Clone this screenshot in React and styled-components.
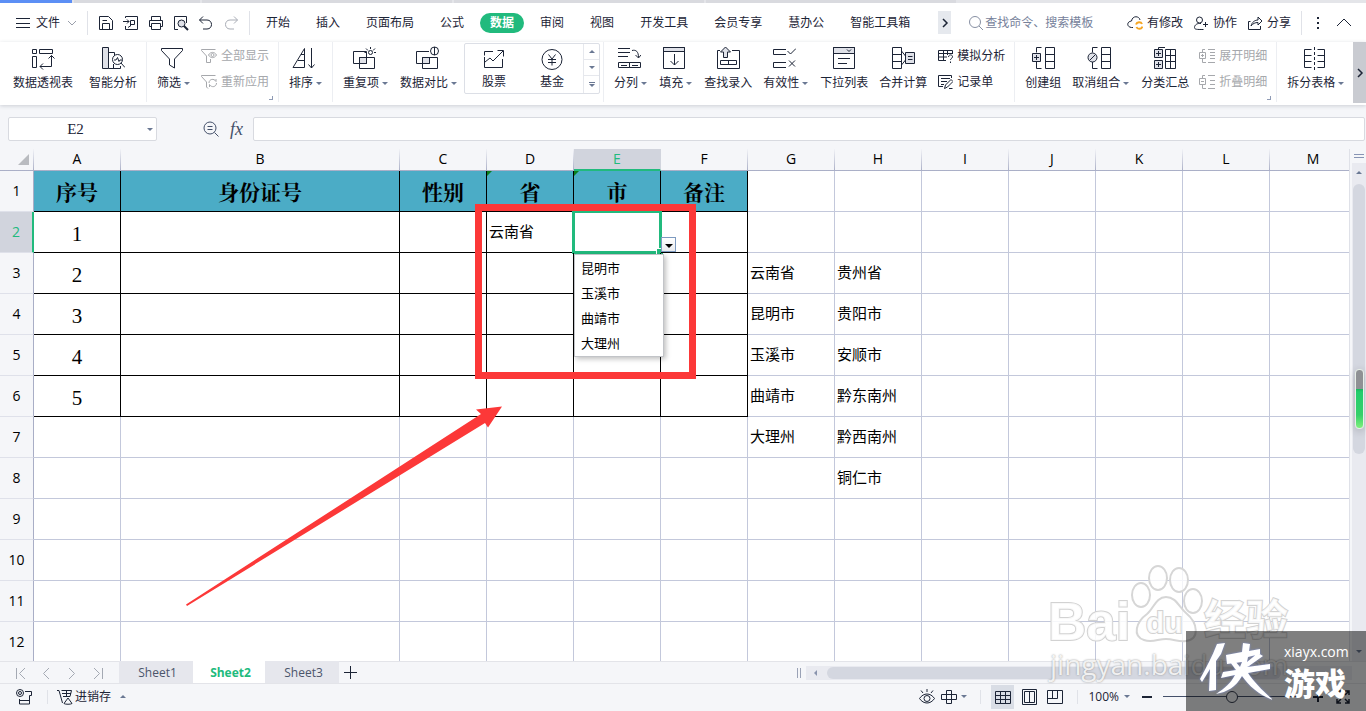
import styled, { createGlobalStyle, css } from 'styled-components';

const GlobalStyle = createGlobalStyle`
  * {
    box-sizing: border-box;
  }

  body {
    margin: 0;
    overflow: hidden;
    background: #f5f6f9;
    color: #1c2436;
    font: 12px/16px 'Open Sans', 'Noto Sans CJK SC', sans-serif;
  }

  button {
    padding: 0;
    border: 0;
    background: none;
    color: inherit;
    font: inherit;
    white-space: nowrap;
  }

  svg {
    display: block;
    flex: none;
  }
`;

const Page = styled.div`
  height: 100vh;
  display: flex;
  flex-direction: column;
  position: relative;
  overflow: hidden;
`;

/* ---------- icons ---------- */

const Svg = styled.svg`
  width: ${({ $size }) => $size}px;
  height: ${({ $size }) => $size}px;
  fill: none;
  stroke: currentColor;
  stroke-width: 1;

  .shade {
    fill: #dfe1e8;
  }
  .solid {
    fill: currentColor;
    stroke: none;
  }
  .orange {
    stroke: #f5a623;
    stroke-width: 2;
  }
`;

const Icon = ({ size = 16, children }) => (
  <Svg $size={size} viewBox={`0 0 ${size} ${size}`} aria-hidden="true">
    {children}
  </Svg>
);

const big = {
  pivot: (
    <>
      <path d="M1.5 3.5h4v4h-4zM8.5 3.5h13v4h-13zM1.5 10.5h4v11h-4z" />
      <path d="M20.5 9.500V20.500H9M17.500 12.500l3-3 3 3M12 17.500l-3 3 3 3" />
    </>
  ),
  analysis: (
    <>
      <path className="shade" d="M1.5 1.5h6v21h-6z" />
      <path d="M7.5 6.5h6v3M7.5 22.5h12M12.5 18v4.5M19.500 20v2.500" />
      <circle cx="16.5" cy="13.5" r="5" />
      <path d="M13 14h2l1.500-2.500 1.500 4 1-1.500h2M20 17l4 4.500" />
    </>
  ),
  filter: <path d="M1.5 2.5h21v2l-8 8.500v9l-5-3v-6l-8-8.500z" />,
  sort: (
    <path d="M1 21.5 12.5 2.5v19H1M9 8.5h3.500M6 14.5h6.500M19.5 2v20M16.5 18.5l3 3.500 3-3.500" />
  ),
  repeat: (
    <>
      <path className="shade" d="M7.5 11.5h7v6h-7z" />
      <path d="M1.5 5.5h13v12h-13zM7.5 11.5h15v11h-15z" />
      <circle cx="18.5" cy="6.5" r="2" />
      <path d="M18.5 1v2M14 2.5l2 2M23 2.5l-2 2M12.5 6.5H15M22 6.5h2" />
    </>
  ),
  compare: (
    <>
      <path className="shade" d="M7.5 11.5h7v6h-7z" />
      <path d="M14 5.5H1.5v12h13V11M7.5 11.5h15v11h-15z" />
      <circle cx="19.5" cy="5" r="4" />
      <path d="M19.5 1v8" />
    </>
  ),
  stock: <path d="M11 4.5H2.5v4M2.5 10v10.500h18V12M3 15l5-4 3 3 10-10M15.5 3.5h6v6" />,
  fund: (
    <>
      <circle cx="12" cy="12.5" r="10" />
      <path d="M8.5 7.5 12 12l3.500-4.500M8 12.5h8M8 15.5h8M12 12v6.500" />
    </>
  ),
  split: (
    <>
      <path d="M1 2.5h12M1 6.5h12M1 10.5h10M1.5 16.5h11v5h-11zM12.5 16.5h11v5h-11zM4 19.5h6M15 19.5h6" />
      <path d="M15 4.5c4-1 6.500 1 6.500 7M18.5 9l3 3 2.500-3" />
    </>
  ),
  fill: (
    <>
      <path className="shade" d="M1.5 1.5h21v4h-21z" />
      <path d="M1.5 1.5h21v21h-21zM12.5 8v11M8.5 15l4 4 4-4" />
    </>
  ),
  lookup: (
    <>
      <path d="M4 4.5H1.5v18h22v-18H16M4.5 14.5h16v4h-16zM12.5 14.5v4" />
      <path className="shade" d="M7.5 11.5V6h-3L9.500 1l5 5h-3v5.500z" />
    </>
  ),
  valid: <path d="M14 3.5H1.5v5H14M14 16.5H1.5v5H14M15.5 5l3 3L24 2.500M17 14.500l6 6M23 14.500l-6 6" />,
  list: (
    <>
      <path className="shade" d="M1.5 1.5h21v6h-21z" />
      <path d="M1.5 1.5h21v21h-21zM15 3.5l2 2 2-2M6 12.5h12M6 17.5h9" />
    </>
  ),
  consolidate: (
    <>
      <path d="M1.5 1.5h9v21h-9zM1.5 8.5h9M1.5 15.5h9M10.5 5l4 5M10.5 19l4-5" />
      <path className="shade" d="M14.5 6.5h9v11h-9z" />
      <path d="M17 10.5h4.500M17 13.5h4.500" />
    </>
  ),
  group: (
    <>
      <path d="M10.5 1.5h-5v5M5.5 15v7.500h5M14.5 1.5h9v21h-9zM14.5 8.5h9M14.5 15.5h9" />
      <path className="shade" d="M1.5 7.5h8v8h-8z" />
      <path d="M5.5 9v5M3 11.5h5" />
    </>
  ),
  ungroup: (
    <>
      <path d="M10.5 1.5h-5v5M5.5 16v6.500h5M14.5 1.5h9v21h-9zM14.5 8.5h9M14.5 15.5h9" />
      <circle className="shade" cx="5.5" cy="11.5" r="4.5" />
      <path d="M2.5 14.5l6-6" />
    </>
  ),
  subtotal: (
    <>
      <path d="M12 1.5H5.500v2M12.5 3.5h10v19h-10zM12.5 9.5h10M12.5 15.5h10M17.5 3.5v19" />
      <path className="shade" d="M1.5 3.5h8v8h-8zM1.5 14.5h8v8h-8z" />
      <path d="M5.5 5v5M3 7.5h5M5.5 16v5M3 18.5h5" />
    </>
  ),
  divide: (
    <>
      <path d="M9.5 3.5h-7v18h7M2.5 9.5h7M2.5 15.5h7M15.5 3.5h7v18h-7M15.5 9.5h7M15.5 15.5h7" />
      <path strokeDasharray="3 2" d="M12.5 1v23" />
    </>
  ),
};

const small = {
  save: <path d="M1.5 1.5h9l4 4v9h-13zM4.5 14V8.5h7V14M4.5 5.5H9" />,
  export: <path d="M2.5 3V1.5h12v13h-12V11M0 6.5h6M4 4.5l2 2-2 2M7.5 11V5.5h4v4h-4M5 12.5l3-2" />,
  print: <path d="M3.5 5V1.5h9V5M3.5 11.5h-2v-6h13v6h-2M3.500 8.5h9v6h-9z" />,
  preview: (
    <>
      <path d="M5 14.5H1.5v-13h12V8" />
      <circle className="shade" cx="8.5" cy="8.5" r="3.5" />
      <path strokeWidth="2" d="M11 11l4 4" />
    </>
  ),
  undo: <path d="M5 1.5 1.5 5 5 8.5M1.5 5H9c6 0 6 9 0 9H5" />,
  redo: <path d="M11 1.5 14.5 5 11 8.5M14.5 5H7c-6 0-6 9 0 9h4" />,
  showAll: (
    <>
      <path d="M9.500 11v3.500h-4V8L.5 2.5v-1h14" />
      <path d="M7.5 7c2-3.500 6-3.500 8 0-2 3.500-6 3.500-8 0z" />
      <circle cx="11.5" cy="7" r="1.5" />
    </>
  ),
  reapply: <path d="M7 14.5 5.5 13V8L.5 2.5v-1h14M8 9c0-4 5-5 7-1.500V5M15.500 9c0 4-5 5-7 1.500V13" />,
  whatIf: (
    <path d="M9 12.5H1.5v-10h14V6M1.5 5.5h14M1.5 9H10M6.5 2.5v10M10.5 2.5V7M11.5 9c0-3 4.500-2.500 4 0-.3 1.500-2 1.500-2 3M13.5 13.500V15" />
  ),
  record: (
    <path d="M14.5 4V1.5h-13v11H6M4 4.5h9M4 7.5h6M4 10.5h3M7.5 14.5l1-3.500L14 5.5l2 2L10.5 13zM12 14.5h3.500" />
  ),
  expand: (
    <path d="M6 1.5H3.5V4M3.5 10v4.500H7M.5 4.5h6v6h-6zM3.5 6v3M2 7.5h3M9 1.5h7M11 4.5h5M11 7.5h5M11 10.5h5M9 14.5h7" />
  ),
  collapse: (
    <path d="M6 1.5H3.5V4M3.5 10v4.500H7M.5 4.5h6v6h-6zM2 7.5h3M9 1.5h7M11 6.5h5M11 10.5h5M9 14.5h7" />
  ),
  search: (
    <>
      <circle cx="7" cy="7" r="5.5" />
      <path d="M11 11l4 4" />
    </>
  ),
  cloud: (
    <>
      <path d="M6 12.5H4.5c-5-.5-5-6 0-6.500 1-6 8-5 8.500-1" />
      <path className="orange" d="M9 9.5c1-3 5-3 6-.5M15.5 11.5c-1 3-5 3-6 .5" />
    </>
  ),
  people: (
    <>
      <circle cx="6.500" cy="5" r="3" />
      <path d="M8 8.500c-4-.5-6.500 1.500-6.500 4 0 2 2 2 9 2M10 9.5h5M12.500 7v5" />
    </>
  ),
  share: <path d="M3.500 6.5h-2v8h12V11M4 11c1-4 4-6 7-6V2l4 4-4 4V7.5C8 7.5 6 8.5 4 11z" />,
  zoomOut: (
    <>
      <circle cx="7" cy="7" r="6" />
      <path d="M11.5 11.5l4 4M4.5 5.5h5M4.5 8.5h5" />
    </>
  ),
  macro: (
    <>
      <circle cx="4" cy="4" r="3.5" />
      <circle cx="4" cy="4" r="1.5" />
      <path d="M9 2.500h6.500v4h-2v8M3.500 10v5h10v-3.500H3.500" />
    </>
  ),
  stockCart: (
    <path d="M0 1.5h2L5.500 14M4.500 1.5h10l-1.500 6H6M9.500 1.5v6M5 4.5h9M7 14.5l4-5.500 4 5.500c-1 1-7 1-8 0z" />
  ),
  eye: (
    <>
      <path d="M.5 9.5c4-6 11-6 15 0-4 6-11 6-15 0zM8 0v3M2 1.5 4 4M14 1.5 12 4" />
      <circle cx="8" cy="9.5" r="3" />
    </>
  ),
  cross: <path d="M5.5 1.5h5v13h-5zM.5 5.5h15v5H.5z" />,
  normal: <path d="M.5 2.5h15v12H.5zM.5 6.5h15M.5 10.5h15M5.5 2.5v12M10.5 2.5v12" />,
  pageView: <path d="M1.5 .5h14v15h-14zM3.5 2.5h10v11h-10zM8.5 2.5v11" />,
  breakView: <path d="M.5 1.5h15v13H.5zM5.5 1.5v8M.5 9.5h10v-8" />,
  fullscreen: (
    <path
      strokeWidth="1.500"
      d="M10 2h4v4M14 2l-4 4M6 2H2v4M2 2l4 4M10 14h4v-4M14 14l-4-4M6 14H2v-4M2 14l4-4"
    />
  ),
};

const Caret = styled.i`
  display: block;
  width: 0;
  height: 0;
  flex: none;
  border: solid transparent;
  ${({ $up }) =>
    $up
      ? css`
          border-width: 0 3px 3px;
          border-bottom-color: #6a7893;
        `
      : css`
          border-width: 3px 3px 0;
          border-top-color: #6a7893;
        `}
`;

/* ---------- title strip and menu ---------- */

const DocStrip = styled.div`
  height: 3px;
  display: flex;
  gap: 2px;
  background: #e4e5e9;

  span {
    width: 250px;
    background: #d9dadf;
  }
  .active {
    width: 72px;
    background: #5c8ff5;
  }
  .first {
    width: 126px;
  }
`;

const MenuBar = styled.header`
  height: 39px;
  display: flex;
  align-items: center;
  background: #fff;
  white-space: nowrap;
`;

const FileButton = styled.button`
  display: flex;
  align-items: center;
  gap: 5px;
  padding: 0 8px 0 15px;
`;

const Divider = styled.i`
  width: 1px;
  height: 24px;
  flex: none;
  background: #e0e2e8;
`;

const QuickTools = styled.div`
  display: flex;
  gap: 9px;
  padding: 0 10px;

  button:last-child {
    color: #a9adb6;
  }
`;

const Tabs = styled.nav`
  display: flex;
  padding-left: 3px;
`;

const MenuTab = styled.button`
  height: 20px;
  margin: 0 3px;
  padding: 0 10px;
  border-radius: 10px;
  ${({ $active }) =>
    $active &&
    css`
      background: #21ba7d;
      color: #fff;
      font-weight: 700;
    `}
`;

const MoreButton = styled.button`
  width: 13px;
  height: 23px;
  margin-left: 15px;
  display: grid;
  place-items: center;
  background: #e6e9ee;
`;

const SearchBox = styled.label`
  display: flex;
  align-items: center;
  gap: 1px;
  flex: 1;
  padding-left: 17px;
  color: #8790a3;

  input {
    width: 120px;
    padding: 0;
    border: 0;
    outline: 0;
    background: none;
    font: inherit;
    &::placeholder {
      color: #76819a;
      opacity: 1;
    }
  }
`;

const AccountTools = styled.div`
  display: flex;
  align-items: center;
  gap: 10px;
  padding-right: 14px;

  button {
    display: flex;
    align-items: center;
    gap: 4px;
  }
`;

/* ---------- ribbon ---------- */

const RibbonBar = styled.div`
  height: 63px;
  display: flex;
  background: #fff;
  box-shadow: 0 1px 4px rgba(40, 50, 70, 0.2);
  position: relative;
`;

const Group = styled.div`
  height: 60px;
  display: flex;
  flex: none;
  padding: 0 3px 0 5px;
  border-right: 1px solid #eceef2;
  position: relative;
  &:first-child {
    padding-left: 8px;
    gap: 5px;
  }
`;

const Corner = styled.i`
  position: absolute;
  right: 5px;
  bottom: 2px;
  width: 4px;
  height: 4px;
  border: solid #8f9bb5;
  border-width: 0 1px 1px 0;
`;

const BigButton = styled.button`
  display: flex;
  flex-direction: column;
  align-items: center;
  padding: 4px 6px 0 5px;

  > svg {
    margin-right: ${({ $menu }) => ($menu ? 4 : 0)}px;
  }
  span {
    display: flex;
    align-items: center;
    margin-top: 5px;
  }
  ${Caret} {
    margin: 0 1px 0 3px;
  }
`;

const Stack = styled.div`
  display: flex;
  flex-direction: column;
  padding-top: 1px;
`;

const SmallButton = styled.button`
  height: 26px;
  display: flex;
  align-items: center;
  gap: 4px;
  padding: 0 6px 0 4px;
  color: ${({ disabled }) => (disabled ? '#a6a8ac' : 'inherit')};
`;

const Gallery = styled.div`
  width: 136px;
  height: 51px;
  display: flex;
  margin-top: 1px;
  border: 1px solid #dcdfe6;
  border-radius: 2px;

  > button {
    width: 58px;
    display: flex;
    flex-direction: column;
    align-items: center;
    gap: 3px;
    padding-top: 3px;
  }
`;

const GallerySteps = styled.div`
  flex: 1;
  display: grid;
  margin-left: 2px;
  border-left: 1px solid #e6e8ed;

  button {
    display: grid;
    place-content: center;
    gap: 1px;
    & + button {
      border-top: 1px solid #e6e8ed;
    }
  }
  hr {
    width: 6px;
    height: 1px;
    margin: 0;
    border: 0;
    background: #6a7893;
  }
`;

const ScrollRight = styled.button`
  width: 13px;
  height: 61px;
  display: grid;
  place-items: center;
  background: #c9cbd1;
  position: absolute;
  right: 0;
`;

/* ---------- formula bar ---------- */

const FormulaBar = styled.div`
  height: 44px;
  display: flex;
  align-items: center;
  padding: 4px 1px 0 8px;

  input {
    height: 24px;
    border: 1px solid #d8dae0;
    border-radius: 2px;
    outline: 0;
    background: #fff;
  }
`;

const NameBox = styled.div`
  width: 149px;
  display: flex;
  align-items: center;

  input {
    width: 149px;
    padding: 0 14px 0 0;
    color: #1c2436;
    font: 15px 'Liberation Serif', serif;
    text-align: center;
  }
  button {
    width: 14px;
    margin-left: -14px;
    padding: 8px 5px 8px 4px;
  }
`;

const FormulaTools = styled.div`
  display: flex;
  align-items: center;
  gap: 11px;
  margin: 0 10px 0 46px;
  color: #44506a;

  em {
    font: italic 18px/20px 'Liberation Serif', serif;
  }
`;

const FormulaInput = styled.input`
  flex: 1;
`;

/* ---------- sheet ---------- */

const SheetArea = styled.main`
  flex: 1;
  min-height: 0;
  display: flex;
`;

const GridPane = styled.div`
  flex: 1;
  min-width: 0;
  overflow: hidden;
  position: relative;
  background: #fff;
`;

const Grid = styled.table`
  width: 1357px;
  table-layout: fixed;
  border-collapse: separate;
  border-spacing: 0;
  color: #000;
  font: 15px/20px 'Noto Sans CJK SC', sans-serif;
`;

const headActive = css`
  background: #d1d4dd;
  color: #21ba7d;
`;

const ColHead = styled.th`
  height: 22px;
  padding: 0 0 1px;
  background: #f5f6f9;
  border-right: 1px solid;
  border-bottom: 1px solid;
  border-image: linear-gradient(#f5f6f9, #a9aec6) 1;
  font: 14px/20px 'Open Sans', sans-serif;
  ${({ $active }) =>
    $active &&
    css`
      ${headActive}
      padding: 0;
      border-image: none;
      border-right-color: #d1d4dd;
      border-bottom: 2px solid #21ba7d;
    `}

  svg {
    margin: 2px 0 0 18px;
    color: #b9bbc0;
  }
`;

const RowHead = styled.th`
  height: 41px;
  padding: 0;
  background: #f5f6f9;
  border-right: 1px solid #a9aec6;
  border-bottom: 1px solid #dfe1ea;
  font: 14px/20px 'Open Sans', sans-serif;
  ${({ $active }) =>
    $active &&
    css`
      ${headActive}
      border-right: 2px solid #21ba7d;
    `}
`;

const Cell = styled.td`
  padding: 0 2px 2px;
  border: solid ${({ $inked }) => ($inked ? '#000' : '#c3c8db')};
  border-width: 0 1px 1px 0;
  white-space: nowrap;
  position: relative;

  ${({ $kind }) =>
    $kind === 'title' &&
    css`
      padding: 0;
      background: #4bacc6;
      font: 700 21px/30px 'Noto Serif CJK SC', 'Noto Sans CJK SC', serif;
      text-align: center;
    `}
  ${({ $kind }) =>
    $kind === 'index' &&
    css`
      padding: 3px 0 0;
      font: 21px/24px 'Liberation Serif', serif;
      text-align: center;
    `}
`;

const CellMark = styled.i`
  position: absolute;
  top: 0;
  left: 0;
  border: solid transparent;
  border-width: 5px 5px 0 0;
  border-top-color: #0a7f1d;
`;

const Selection = styled.div`
  position: absolute;
  inset: -1px -2px -2px -2px;
  border: 3px solid #21ba7d;
  border-top-width: 2px;

  &::after {
    content: '';
    position: absolute;
    right: -4px;
    bottom: -4px;
    width: 6px;
    height: 6px;
    border: solid #fff;
    border-width: 1px 0 0 1px;
    background: #21ba7d;
  }
`;

const PickButton = styled.button`
  position: absolute;
  left: 87px;
  top: 25px;
  z-index: 2;
  width: 15px;
  height: 15px;
  display: grid;
  place-items: center;
  padding-top: 2px;
  background: linear-gradient(#fff, #e9ebef);
  border: 1px solid #7d9ac0;
  ${Caret} {
    border-width: 4px 4px 0;
    border-top-color: #000;
  }
`;

const Options = styled.ul`
  position: absolute;
  left: 0;
  top: 42px;
  z-index: 2;
  width: 90px;
  margin: 0;
  padding: 0 0 1px;
  list-style: none;
  background: #fff;
  border: 1px solid #c2c4c8;
  box-shadow: 2px 2px 5px rgba(0, 0, 0, 0.25);

  li {
    padding-left: 6px;
    font-size: 13px;
    line-height: 25px;
  }
`;

const RedBox = styled.div`
  position: absolute;
  left: 475px;
  top: 55px;
  z-index: 3;
  width: 221px;
  height: 175px;
  border: 7px solid #fc3838;
`;

const RedArrow = styled.svg`
  position: absolute;
  left: 180px;
  top: 251px;
  z-index: 3;
  fill: #fc3838;
`;

const VScroll = styled.aside`
  width: 17px;
  display: flex;
  flex-direction: column;
  align-items: center;
  padding-left: 2px;
  border-left: 1px solid #dfe1e8;
  background: #f5f6f9;
`;

const SplitHandle = styled.i`
  width: 10px;
  height: 4px;
  margin: 5px 0;
  border: solid #8794b4;
  border-width: 1px 0;
`;

const VTrack = styled.div`
  flex: 1;
  width: 14px;
  display: flex;
  flex-direction: column;
  align-items: center;
  padding: 8px 0;
  background: #e9eaf0;

  ${Caret}:last-child {
    margin-top: auto;
  }
`;

const VThumb = styled.div`
  width: 12px;
  height: 270px;
  margin-top: 10px;
  padding: 185px 2px 0;
  border-radius: 6px;
  background: #d4d7e0;

  i {
    display: block;
    width: 9px;
    height: 60px;
    border: 1px solid #e8efe8;
    border-radius: 4px;
    background: linear-gradient(#8f9194 19px, #17b75c 19px, #22cd6c 22px, #35d06a 45px, #7ef07c);
    box-shadow: 0 2px 8px rgba(0, 0, 0, 0.2);
  }
`;

/* ---------- bottom bars ---------- */

const SheetBar = styled.footer`
  height: 23px;
  display: flex;
  align-items: center;
  border-top: 1px solid #e3e4e9;
  border-bottom: 1px solid #e3e4e9;
`;

const SheetNav = styled.div`
  width: 119px;
  display: flex;
  gap: 10px;
  padding-left: 12px;
  color: #a4a9b3;
`;

const SheetTab = styled.button`
  height: 22px;
  width: ${({ $active }) => ($active ? 72 : 74)}px;
  margin-top: -1px;
  padding: 2px 0 0 3px;
  background: ${({ $active }) => ($active ? '#fff' : '#e6e7ed')};
  color: ${({ $active }) => ($active ? '#21ba7d' : '#4b556b')};
  font-weight: ${({ $active }) => ($active ? 700 : 400)};
`;

const AddSheet = styled.button`
  margin: 0 auto 0 4px;
`;

const HSplit = styled.i`
  width: 4px;
  height: 10px;
  margin-right: 5px;
  border: solid #9aa2b6;
  border-width: 0 1px;
`;

const HTrack = styled.div`
  width: 40%;
  height: 14px;
  display: flex;
  align-items: center;
  justify-content: space-between;
  margin-right: 14px;
  padding: 0 7px 0 6px;
  background: #e9eaf0;
  color: #8a94ad;

  i {
    flex: 1;
    height: 12px;
    margin: 0 56px 0 7px;
    border-radius: 6px;
    background: #d4d7e0;
  }
`;

const StatusBar = styled.footer`
  height: 27px;
  display: flex;
  align-items: center;
  padding: 0 15px 2px 16px;
`;

const StatusButton = styled.button`
  height: 24px;
  min-width: 23px;
  display: flex;
  align-items: center;
  justify-content: center;
  gap: ${({ $gap = 2 }) => $gap}px;
  background: ${({ $active }) => ($active ? '#d9dde5' : 'none')};
`;

const ViewTools = styled.div`
  display: flex;
  align-items: center;
  gap: 3px;
  margin: 0 11px 0 auto;
`;

const Spacer = styled(Divider)`
  height: 14px;
  margin: 0 ${({ $right }) => $right}px 0 ${({ $left }) => $left}px;
`;

const ZoomRange = styled.input`
  width: 138px;
  height: 14px;
  margin: 0 11px 0 10px;
  appearance: none;
  background: linear-gradient(#44506a, #44506a) center / 100% 1px no-repeat;

  &::-webkit-slider-thumb {
    appearance: none;
    width: 12px;
    height: 12px;
    border: 1px solid #333b4d;
    border-radius: 50%;
    background: #f5f6f9;
  }
`;

const FullScreen = styled.button`
  margin-left: 11px;
`;

/* ---------- watermarks ---------- */

const Watermark = styled.div`
  position: absolute;
  right: 76px;
  bottom: 26px;
  width: 242px;
  height: 120px;
  color: rgba(255, 255, 255, 0.85);
  font-family: 'Liberation Sans', 'Noto Sans CJK SC', sans-serif;
  font-weight: 700;
  white-space: nowrap;
  pointer-events: none;

  svg {
    position: absolute;
    left: 80px;
    top: 0;
    fill: rgba(255, 255, 255, 0.8);
    stroke: #d6d6d6;
  }
`;

const Mark = styled.span`
  position: absolute;
  left: ${({ $left }) => $left}px;
  top: ${({ $top }) => $top}px;
  font-size: ${({ $size }) => $size}px;
  line-height: 1;
  -webkit-text-stroke: 2px #d2d2d2;
  paint-order: stroke fill;
`;

const MarkUrl = styled.span`
  position: absolute;
  left: 2px;
  top: 83px;
  font: 28px/32px 'Open Sans', sans-serif;
  text-shadow: 0 0 2px #8c8c8c;
`;

const SiteBadge = styled.div`
  position: absolute;
  right: 0;
  bottom: 0;
  width: 180px;
  height: 80px;
  display: flex;
  align-items: center;
  gap: 12px;
  padding-left: 14px;
  background: rgba(0, 0, 0, 0.5);
  color: #fff;
  white-space: nowrap;
  pointer-events: none;

  svg {
    fill: #fff;
    filter: drop-shadow(0 0 1px #7f8fd0);
  }
  div {
    display: flex;
    flex-direction: column;
    gap: 5px;
    font-size: 14px;
  }
  b {
    font: 900 31px/34px 'Noto Sans CJK SC', sans-serif;
  }
`;

/* ---------- data ---------- */

const menuTabs = ['开始', '插入', '页面布局', '公式', '数据', '审阅', '视图', '开发工具', '会员专享', '慧办公', '智能工具箱'];

const quickTools = [
  ['save', '保存'],
  ['export', '输出为PDF'],
  ['print', '打印'],
  ['preview', '打印预览'],
  ['undo', '撤销'],
  ['redo', '恢复'],
];

const accountTools = [
  ['cloud', '有修改'],
  ['people', '协作'],
  ['share', '分享'],
];

const navIcons = [
  ['第一张', 'M4.500 3v11M13 3 7.500 8.500 13 14'],
  ['上一张', 'M11 3 5.500 8.500 11 14'],
  ['下一张', 'M5 3l5.500 5.500L5 14'],
  ['最后一张', 'M12.500 3v11M4 3l5.500 5.500L4 14'],
];

const columns = 'ABCDEFGHIJKLM'.split('');
const rows = Array.from({ length: 12 }, (_, i) => i + 1);
const titles = ['序号', '身份证号', '性别', '省', '市', '备注'];
const cities = ['昆明市', '玉溪市', '曲靖市', '大理州'];

const cellText = {
  D2: '云南省',
  G3: '云南省',
  G4: '昆明市',
  G5: '玉溪市',
  G6: '曲靖市',
  G7: '大理州',
  H3: '贵州省',
  H4: '贵阳市',
  H5: '安顺市',
  H6: '黔东南州',
  H7: '黔西南州',
  H8: '铜仁市',
};

const Tool = ({ icon, label, menu }) => (
  <BigButton type="button" $menu={menu}>
    <Icon size={24}>{big[icon]}</Icon>
    <span>
      {label}
      {menu && <Caret />}
    </span>
  </BigButton>
);

const SmallTool = ({ icon, label, disabled }) => (
  <SmallButton type="button" disabled={disabled}>
    <Icon>{small[icon]}</Icon>
    {label}
  </SmallButton>
);

const Chevron = () => (
  <Icon size={12}>
    <path strokeWidth="1.500" d="M4 2l4 4-4 4" />
  </Icon>
);

const Menu = () => (
  <MenuBar>
    <FileButton type="button">
      <Icon>
        <path d="M1 3.5h14M1 8.5h14M1 12.5h14" />
      </Icon>
      文件
      <Icon size={14}>
        <path stroke="#9a9fab" d="M3 5l4 4 4-4" />
      </Icon>
    </FileButton>
    <Divider />
    <QuickTools>
      {quickTools.map(([icon, label]) => (
        <button key={icon} type="button" aria-label={label}>
          <Icon>{small[icon]}</Icon>
        </button>
      ))}
    </QuickTools>
    <Divider />
    <Tabs>
      {menuTabs.map((tab) => (
        <MenuTab key={tab} type="button" $active={tab === '数据'}>
          {tab}
        </MenuTab>
      ))}
    </Tabs>
    <MoreButton type="button" aria-label="更多">
      <Chevron />
    </MoreButton>
    <SearchBox>
      <Icon>{small.search}</Icon>
      <input placeholder="查找命令、搜索模板" aria-label="查找命令、搜索模板" />
    </SearchBox>
    <AccountTools>
      {accountTools.map(([icon, label]) => (
        <button key={icon} type="button">
          <Icon>{small[icon]}</Icon>
          {label}
        </button>
      ))}
      <Divider />
      <button type="button" aria-label="选项">
        <Icon size={14}>
          <path className="solid" d="M5 1h2v2H5zM5 6h2v2H5zM5 11h2v2H5z" />
        </Icon>
      </button>
      <button type="button" aria-label="收起功能区">
        <Icon>
          <path d="M1 11l7-7 7 7" />
        </Icon>
      </button>
    </AccountTools>
  </MenuBar>
);

const Ribbon = () => (
  <RibbonBar>
    <Group>
      <Tool icon="pivot" label="数据透视表" />
      <Tool icon="analysis" label="智能分析" />
    </Group>
    <Group>
      <Tool icon="filter" label="筛选" menu />
      <Stack>
        <SmallTool icon="showAll" label="全部显示" disabled />
        <SmallTool icon="reapply" label="重新应用" disabled />
      </Stack>
      <Corner />
    </Group>
    <Group>
      <Tool icon="sort" label="排序" menu />
    </Group>
    <Group>
      <Tool icon="repeat" label="重复项" menu />
      <Tool icon="compare" label="数据对比" menu />
      <Gallery>
        <button type="button">
          <Icon size={24}>{big.stock}</Icon>
          股票
        </button>
        <button type="button">
          <Icon size={24}>{big.fund}</Icon>
          基金
        </button>
        <GallerySteps>
          <button type="button" aria-label="上一行">
            <Caret $up />
          </button>
          <button type="button" aria-label="下一行">
            <Caret />
          </button>
          <button type="button" aria-label="全部">
            <hr />
            <Caret />
          </button>
        </GallerySteps>
      </Gallery>
    </Group>
    <Group>
      <Tool icon="split" label="分列" menu />
      <Tool icon="fill" label="填充" menu />
      <Tool icon="lookup" label="查找录入" />
      <Tool icon="valid" label="有效性" menu />
      <Tool icon="list" label="下拉列表" />
      <Tool icon="consolidate" label="合并计算" />
      <Stack>
        <SmallTool icon="whatIf" label="模拟分析" />
        <SmallTool icon="record" label="记录单" />
      </Stack>
    </Group>
    <Group>
      <Tool icon="group" label="创建组" />
      <Tool icon="ungroup" label="取消组合" menu />
      <Tool icon="subtotal" label="分类汇总" />
      <Stack>
        <SmallTool icon="expand" label="展开明细" disabled />
        <SmallTool icon="collapse" label="折叠明细" disabled />
      </Stack>
      <Corner />
    </Group>
    <Group>
      <Tool icon="divide" label="拆分表格" menu />
    </Group>
    <ScrollRight type="button" aria-label="向右滚动">
      <Chevron />
    </ScrollRight>
  </RibbonBar>
);

const SheetCell = ({ col, row }) => {
  const index = columns.indexOf(col);
  const inked = index < 6 && row < 7;
  if (row === 1 && inked) {
    return (
      <Cell $inked $kind="title">
        {titles[index]}
        {(col === 'D' || col === 'E') && <CellMark />}
      </Cell>
    );
  }
  if (col === 'A' && inked) {
    return (
      <Cell $inked $kind="index">
        {row - 1}
      </Cell>
    );
  }
  return (
    <Cell $inked={inked}>
      {cellText[col + row]}
      {col + row === 'E2' && (
        <>
          <Selection />
          <PickButton type="button" aria-label="选择市">
            <Caret />
          </PickButton>
          <Options role="listbox" aria-label="市">
            {cities.map((city) => (
              <li key={city} role="option" aria-selected="false">
                {city}
              </li>
            ))}
          </Options>
        </>
      )}
    </Cell>
  );
};

const Sheet = () => (
  <GridPane>
    <Grid>
      <colgroup>
        <col width="34" />
        {columns.map((col) => (
          <col key={col} width={col === 'B' ? 279 : 87} />
        ))}
      </colgroup>
      <thead>
        <tr>
          <ColHead aria-label="全选">
            <Icon size={12}>
              <path className="solid" d="M11 0v11H0z" />
            </Icon>
          </ColHead>
          {columns.map((col) => (
            <ColHead key={col} $active={col === 'E'}>
              {col}
            </ColHead>
          ))}
        </tr>
      </thead>
      <tbody>
        {rows.map((row) => (
          <tr key={row}>
            <RowHead $active={row === 2}>{row}</RowHead>
            {columns.map((col) => (
              <SheetCell key={col} col={col} row={row} />
            ))}
          </tr>
        ))}
      </tbody>
    </Grid>
    <RedBox />
    <RedArrow width="330" height="210" viewBox="0 0 330 210">
      <path d="M6 204.5 301 14l-5-4.500 26-3-14 21-3-4.500L7 206z" />
    </RedArrow>
  </GridPane>
);

const SheetTabs = () => (
  <SheetBar>
    <SheetNav>
      {navIcons.map(([label, d]) => (
        <button key={label} type="button" aria-label={label}>
          <Icon>
            <path d={d} />
          </Icon>
        </button>
      ))}
    </SheetNav>
    {['Sheet1', 'Sheet2', 'Sheet3'].map((name) => (
      <SheetTab key={name} type="button" $active={name === 'Sheet2'}>
        {name}
      </SheetTab>
    ))}
    <AddSheet type="button" aria-label="新建工作表">
      <Icon>
        <path d="M7.5 1v13M1 7.5h13" />
      </Icon>
    </AddSheet>
    <HSplit />
    <HTrack>
      <Icon size={8}>
        <path className="solid" d="M5 1v6L2 4z" />
      </Icon>
      <i />
      <Icon size={8}>
        <path className="solid" d="M2 1v6l3-3z" />
      </Icon>
    </HTrack>
  </SheetBar>
);

const Status = () => (
  <StatusBar>
    <Icon>{small.macro}</Icon>
    <Spacer $left={15} $right={9} />
    <StatusButton type="button">
      <Icon>{small.stockCart}</Icon>
      进销存
    </StatusButton>
    <StatusButton type="button" aria-label="展开">
      <Caret $up />
    </StatusButton>
    <ViewTools>
      <StatusButton type="button" aria-label="护眼模式">
        <Icon>{small.eye}</Icon>
      </StatusButton>
      <StatusButton type="button" aria-label="阅读模式" $gap={4}>
        <Icon>{small.cross}</Icon>
        <Caret />
      </StatusButton>
      <Spacer $left={10} $right={7} />
      <StatusButton type="button" aria-label="普通视图" $active>
        <Icon>{small.normal}</Icon>
      </StatusButton>
      <StatusButton type="button" aria-label="分页预览">
        <Icon>{small.pageView}</Icon>
      </StatusButton>
      <StatusButton type="button" aria-label="页面布局">
        <Icon>{small.breakView}</Icon>
      </StatusButton>
      <Spacer $left={8} $right={7} />
      <StatusButton type="button" $gap={5}>
        100%
        <Caret />
      </StatusButton>
    </ViewTools>
    <button type="button" aria-label="缩小">
      <Icon size={12}>
        <path strokeWidth="2" d="M1 6h10" />
      </Icon>
    </button>
    <ZoomRange type="range" defaultValue="50" aria-label="显示比例" />
    <button type="button" aria-label="放大">
      <Icon size={12}>
        <path strokeWidth="2" d="M1 6h10M6 1v10" />
      </Icon>
    </button>
    <FullScreen type="button" aria-label="全屏">
      <Icon>{small.fullscreen}</Icon>
    </FullScreen>
  </StatusBar>
);

const Baidu = () => (
  <Watermark>
    <Mark $left={0} $top={30} $size={53}>Bai</Mark>
    <svg width="80" height="80" viewBox="0 0 80 80" strokeWidth="2">
      <ellipse cx="13" cy="30" rx="9" ry="12" />
      <ellipse cx="30" cy="13" rx="9" ry="12" />
      <ellipse cx="51" cy="15" rx="9" ry="12" />
      <ellipse cx="65" cy="36" rx="9" ry="12" />
      <path d="M38 32c10 0 13 10 20 16 12 10 14 26 0 28-8 1-12-2-20-2s-14 4-22 1C4 71 8 57 19 49c7-6 9-17 19-17z" />
    </svg>
    <Mark $left={98} $top={43} $size={30}>du</Mark>
    <Mark $left={156} $top={35} $size={42}>经验</Mark>
    <MarkUrl>jingyan.baidu.com</MarkUrl>
  </Watermark>
);

const Badge = () => (
  <SiteBadge>
    <svg width="72" height="58" viewBox="0 0 72 58">
      <path d="M17 2l8-1-4 11-5 7v29l-7 1 1-22-8 13-2-3C6 26 12 15 17 2z" />
      <path d="M26 13l16-3 1-9 7 1-1 7 11-2v5l-12 3-1 5 11-9 5 3-14 10-2 1 23-3v5l-22 4c5 8 14 17 25 27-14-5-24-14-31-24-6 11-15 16-26 18 9-6 15-11 19-19l-14 3 2-6 13-2-6-8 5-1 5 6 2-5-15 2z" />
    </svg>
    <div>
      xiayx.com
      <b>游戏</b>
    </div>
  </SiteBadge>
);

const App = () => (
  <Page>
    <GlobalStyle />
    <DocStrip>
      <span className="active" />
      <span className="first" />
      <span />
      <span />
      <span />
    </DocStrip>
    <Menu />
    <Ribbon />
    <FormulaBar>
      <NameBox>
        <input defaultValue="E2" aria-label="名称框" />
        <button type="button" aria-label="名称列表">
          <Caret />
        </button>
      </NameBox>
      <FormulaTools>
        <Icon>{small.zoomOut}</Icon>
        <em>fx</em>
      </FormulaTools>
      <FormulaInput aria-label="编辑栏" />
    </FormulaBar>
    <SheetArea>
      <Sheet />
      <VScroll>
        <SplitHandle />
        <VTrack>
          <Caret $up />
          <VThumb>
            <i />
          </VThumb>
          <Caret />
        </VTrack>
      </VScroll>
    </SheetArea>
    <SheetTabs />
    <Status />
    <Baidu />
    <Badge />
  </Page>
);

export default App;
